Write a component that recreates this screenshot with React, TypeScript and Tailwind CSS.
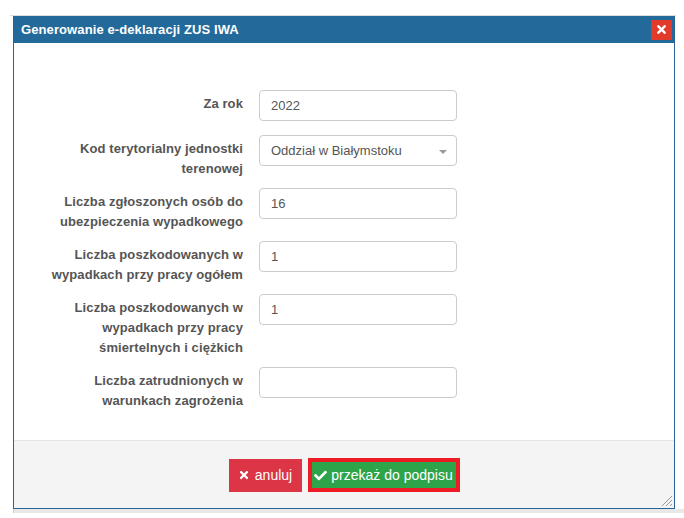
import { FaCheck, FaTimes } from "react-icons/fa";

type Row = {
  label: string[];
  value?: string;
  select?: boolean;
};

const rows: Row[] = [
  { label: ["Za rok"], value: "2022" },
  { label: ["Kod terytorialny jednostki", "terenowej"], value: "Oddział w Białymstoku", select: true },
  { label: ["Liczba zgłoszonych osób do", "ubezpieczenia wypadkowego"], value: "16" },
  { label: ["Liczba poszkodowanych w", "wypadkach przy pracy ogółem"], value: "1" },
  { label: ["Liczba poszkodowanych w", "wypadkach przy pracy", "śmiertelnych i ciężkich"], value: "1" },
  { label: ["Liczba zatrudnionych w", "warunkach zagrożenia"], value: "" },
];

const FormRow = ({ row, first }: { row: Row; first: boolean }) => {
  return (
    <div className={`flex items-start gap-4 ${first ? "mb-[5px]" : ""}`}>
      <label className="w-[200px] shrink-0 pt-[4px] text-right text-[13px] font-bold leading-[20px] tracking-[0.1px] text-[#555]">
        {row.label.map((l) => (
          <div key={l} className="whitespace-nowrap">{l}</div>
        ))}
      </label>
      <div className="relative flex h-[31px] w-[198px] items-center rounded border border-[#ccc] bg-white px-[11px] text-[13px] text-[#555]">
        <span>{row.value}</span>
        {row.select && (
          <span className="absolute right-[9px] top-[14px] h-0 w-0 border-x-[4px] border-t-[4px] border-x-transparent border-t-[#999]" />
        )}
      </div>
    </div>
  );
};

export default function App() {
  return (
    <div className="h-[518px] w-[684px] overflow-hidden bg-white font-['Liberation_Sans',Arial,sans-serif]">
      <div className="ml-[10px] mt-[15px] h-[1px] w-[666px] bg-[#ddd]" />
      <div className="ml-[13px] w-[662px] border-x border-b border-[#2a6496]">
        {/* title bar */}
        <div className="flex h-[27px] items-center justify-between bg-[#236a9b] pl-[7px] pr-[2px]">
          <span className="text-[13px] font-bold tracking-[0.1px] text-white">Generowanie e-deklaracji ZUS IWA</span>
          <div className="flex h-[20px] w-[21px] items-center justify-center bg-[#e23a2b] text-white">
            <FaTimes className="h-[13px] w-[13px]" />
          </div>
        </div>

        {/* body */}
        <div className="h-[397px] bg-white pl-[29px] pt-[47px]">
          <div className="flex flex-col gap-[9px]">
            {rows.map((r, i) => (
              <FormRow key={i} row={r} first={i === 0} />
            ))}
          </div>
        </div>

        {/* footer */}
        <div className="relative flex h-[68px] items-center justify-center gap-[6px] border-t border-[#e5e5e5] bg-[#f4f4f4] pt-[1px]">
          <button className="flex h-[33px] w-[73px] items-center justify-center gap-[5px] whitespace-nowrap bg-[#dc3545] text-[14px] text-white">
            <FaTimes className="h-[12px] w-[12px]" />
            anuluj
          </button>
          <div className="border-[4px] border-[#ed1c24]">
            <button className="flex h-[26px] w-[144px] items-center justify-center gap-[4px] whitespace-nowrap bg-[#2ea44a] text-[14px] text-white">
              <FaCheck className="h-[13px] w-[13px]" />
              przekaż do podpisu
            </button>
          </div>
          <svg className="absolute bottom-[1px] right-[1px]" width="13" height="13" viewBox="0 0 13 13">
            <path d="M12 2 L2 12 M12 6 L6 12 M12 10 L10 12" stroke="#999" strokeWidth="1" />
          </svg>
        </div>
      </div>
      <div className="ml-[13px] h-[4px] w-[671px] border-l border-[#ccc] bg-[#e8e8e8]" />
    </div>
  );
}
